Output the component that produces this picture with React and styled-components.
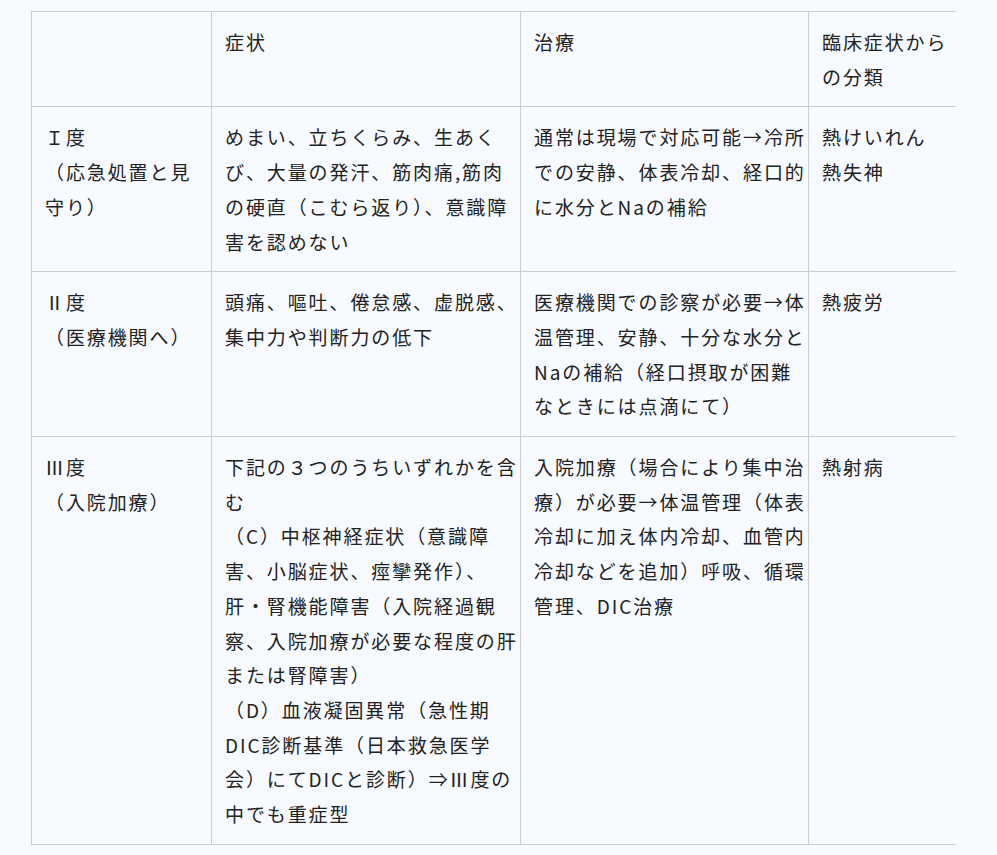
import React from "react";
import styled, { createGlobalStyle } from "styled-components";

const Global = createGlobalStyle`
  html, body { margin: 0; background: #f7faff; }
  body { font-family: "Noto Sans CJK JP", "Noto Sans", sans-serif; color: #222; }
`;

const Wrap = styled.div`
  padding: 11px 0 0 31px;
`;

const Table = styled.table`
  border-collapse: collapse;
  table-layout: fixed;
  width: 924px;
  font-size: 19px;
  letter-spacing: 1.9px;
  line-height: 34.7px;
`;

const Col = styled.col`
  width: ${(p) => p.$w}px;
`;

const Cell = styled.td`
  vertical-align: top;
  padding: 13px 13px 12px;
  border-top: 1px solid #ccc;
  border-bottom: 1px solid #ccc;
  border-left: 1px solid #ccc;
  white-space: nowrap;
`;

const rows = [
  [
    ["Ｉ度", "（応急処置と見", "守り）"],
    ["めまい、立ちくらみ、生あく", "び、大量の発汗、筋肉痛,筋肉", "の硬直（こむら返り）、意識障", "害を認めない"],
    ["通常は現場で対応可能→冷所", "での安静、体表冷却、経口的", "に水分とNaの補給"],
    ["熱けいれん", "熱失神"],
  ],
  [
    ["Ⅱ度", "（医療機関へ）"],
    ["頭痛、嘔吐、倦怠感、虚脱感、", "集中力や判断力の低下"],
    ["医療機関での診察が必要→体", "温管理、安静、十分な水分と", "Naの補給（経口摂取が困難", "なときには点滴にて）"],
    ["熱疲労"],
  ],
  [
    ["Ⅲ度", "（入院加療）"],
    ["下記の３つのうちいずれかを含", "む", "（C）中枢神経症状（意識障", "害、小脳症状、痙攣発作）、", "肝・腎機能障害（入院経過観", "察、入院加療が必要な程度の肝", "または腎障害）", "（D）血液凝固異常（急性期", "DIC診断基準（日本救急医学", "会）にてDICと診断）⇒Ⅲ度の", "中でも重症型"],
    ["入院加療（場合により集中治", "療）が必要→体温管理（体表", "冷却に加え体内冷却、血管内", "冷却などを追加）呼吸、循環", "管理、DIC治療"],
    ["熱射病"],
  ],
];

const Lines = ({ lines }) =>
  lines.map((l, i) => (
    <React.Fragment key={i}>
      {i > 0 && <br />}
      {l}
    </React.Fragment>
  ));

export default function App() {
  return (
    <>
      <Global />
      <Wrap>
        <Table>
          <colgroup>
            <Col $w={180} />
            <Col $w={309} />
            <Col $w={288} />
            <Col $w={147} />
          </colgroup>
          <tbody>
            <tr>
              <Cell></Cell>
              <Cell>症状</Cell>
              <Cell>治療</Cell>
              <Cell>
                <Lines lines={["臨床症状から", "の分類"]} />
              </Cell>
            </tr>
            {rows.map((r, i) => (
              <tr key={i}>
                {r.map((c, j) => (
                  <Cell key={j}>
                    <Lines lines={c} />
                  </Cell>
                ))}
              </tr>
            ))}
          </tbody>
        </Table>
      </Wrap>
    </>
  );
}
